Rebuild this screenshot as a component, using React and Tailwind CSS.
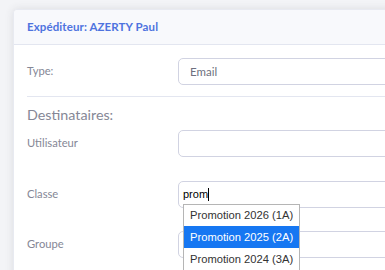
export default function App() {
  return (
    <div className="w-[385px] h-[270px] overflow-hidden bg-[#f3f4f7] pt-[9px] pl-[13px]" style={{ fontFamily: 'Lato, "Open Sans", sans-serif' }}>
      <div className="w-[420px] h-[300px] bg-white rounded-[4px] shadow-[0_0_8px_rgba(58,59,69,0.12)] border border-[#e8eaf1]">
        <div className="h-[35px] bg-[#f8f9fc] border-b border-[#e3e6f0] flex items-center pl-[13px] rounded-t-[4px]">
          <span className="text-[11.5px] font-bold text-[#4e73df] tracking-[0.1px]">Expéditeur: AZERTY Paul</span>
        </div>
        <div className="pl-[13px] pt-[13px]">
          <div className="flex items-center h-[27px]">
            <div className="w-[151px] text-[11.2px] text-[#858796]">Type:</div>
            <div className="flex-1 h-[27px] border border-[#d1d3e2] rounded-[5px] flex items-center pl-[11px] text-[11.5px] text-[#6e707e]">Email</div>
          </div>
          <div className="border-t border-[#e3e6f0] mt-[11px]"></div>
          <div className="mt-[8px] text-[14.3px] text-[#858796] leading-[20px]">Destinataires:</div>
          <div className="flex items-center h-[27px] mt-[5px]">
            <div className="w-[151px] text-[11.2px] text-[#858796]">Utilisateur</div>
            <div className="flex-1 h-[27px] border border-[#d1d3e2] rounded-[5px]"></div>
          </div>
          <div className="flex items-center h-[27px] mt-[24px]">
            <div className="w-[151px] text-[11.2px] text-[#858796]">Classe</div>
            <div className="relative flex-1 h-[27px] border border-[#d1d3e2] rounded-[5px] flex items-center pl-[4px]">
              <span className="text-[11px] text-black leading-none" style={{ fontFamily: '"Liberation Sans", Arial, sans-serif' }}>prom</span>
              <span className="w-[1px] h-[13px] bg-black"></span>
              <div className="absolute left-[4px] top-[22px] w-[117px] bg-white border border-[#b5b5b5] z-10 text-[11.2px] text-[#333] whitespace-nowrap" style={{ fontFamily: '"Liberation Sans", Arial, sans-serif' }}>
                <div className="h-[21px] flex items-center pl-[6px]">Promotion 2026 (1A)</div>
                <div className="h-[22px] flex items-center pl-[6px] bg-[#1677f2] text-white">Promotion 2025 (2A)</div>
                <div className="h-[22px] flex items-center pl-[6px]">Promotion 2024 (3A)</div>
              </div>
            </div>
          </div>
          <div className="flex items-center h-[27px] mt-[23px]">
            <div className="w-[151px] text-[11.2px] text-[#858796]">Groupe</div>
            <div className="flex-1 h-[27px] border border-[#d1d3e2] rounded-[5px]"></div>
          </div>
        </div>
      </div>
    </div>
  );
}
